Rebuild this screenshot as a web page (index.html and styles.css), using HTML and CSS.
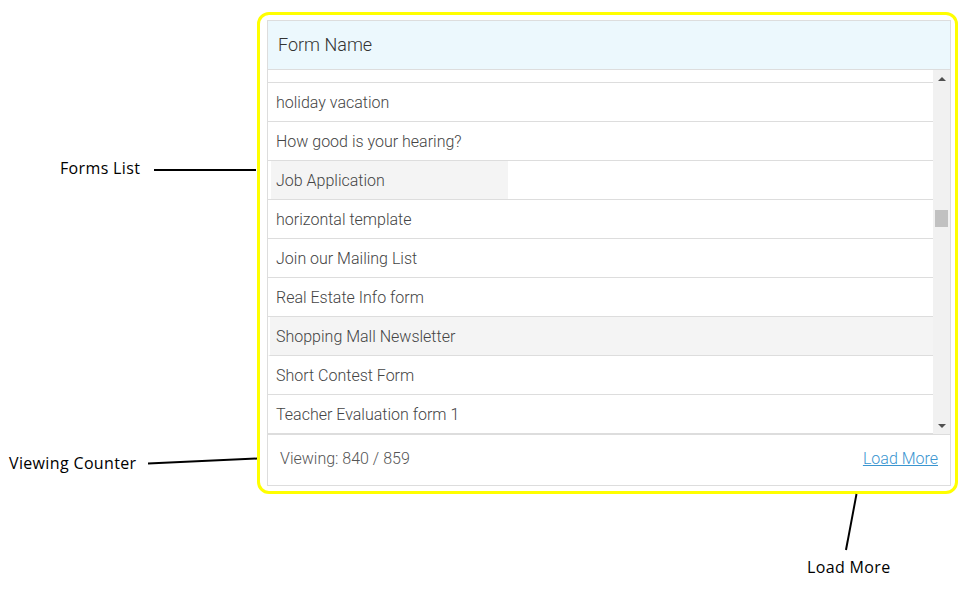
FILE: index.html
```html
<!DOCTYPE html>
<html lang="en">
<head>
    <meta charset="UTF-8">
    <meta name="viewport" content="width=device-width, initial-scale=1.0">
    <title>Forms List - Load More</title>
    <link rel="stylesheet" href="styles.css">
</head>
<body>
    <div class="canvas">
        <div class="frame">
            <div class="panel">
                <div class="panel-head">Form Name</div>

                <div class="panel-body">
                    <ul class="form-list">
                        <li class="row row-cut"></li>
                        <li class="row">holiday vacation</li>
                        <li class="row">How good is your hearing?</li>
                        <li class="row row-split"><span class="cell-hover">Job Application</span></li>
                        <li class="row">horizontal template</li>
                        <li class="row">Join our Mailing List</li>
                        <li class="row">Real Estate Info form</li>
                        <li class="row row-active">Shopping Mall Newsletter</li>
                        <li class="row">Short Contest Form</li>
                        <li class="row">Teacher Evaluation form 1</li>
                    </ul>

                    <div class="scrollbar">
                        <div class="scroll-btn"><span class="arrow-up"></span></div>
                        <div class="scroll-track">
                            <div class="scroll-thumb"></div>
                        </div>
                        <div class="scroll-btn"><span class="arrow-down"></span></div>
                    </div>
                </div>

                <div class="panel-foot">
                    <span class="counter">Viewing: 840 / 859</span>
                    <a href="#" class="load-more">Load More</a>
                </div>
            </div>
        </div>

        <!-- callouts -->
        <svg class="callout-lines" width="971" height="600" viewBox="0 0 971 600">
            <line x1="154" y1="170" x2="256" y2="170" />
            <line x1="148" y1="463.5" x2="257" y2="458.5" />
            <line x1="856.5" y1="494" x2="846" y2="550" />
        </svg>
        <span class="callout callout-forms">Forms List</span>
        <span class="callout callout-counter">Viewing Counter</span>
        <span class="callout callout-more">Load More</span>
    </div>
</body>
</html>
```

FILE: styles.css
```css
body {
    margin: 0;
    padding: 0;
    background-color: #ffffff;
    font-family: 'Roboto', 'Liberation Sans', sans-serif;
}

.canvas {
    position: relative;
    width: 971px;
    height: 600px;
    overflow: hidden;
}

.frame {
    display: inline-block;
    margin: 12px 0 0 257px;
    padding: 5px 4px 5px 7px;
    border: 3px solid #ffff00;
    border-radius: 12px;
}

.panel {
    width: 682px;
    border: 1px solid #dddddd;
    background-color: #ffffff;
}

.panel-head {
    height: 48px;
    line-height: 48px;
    padding-left: 10px;
    background-color: #ecf8fd;
    border-bottom: 1px solid #dddddd;
    color: #333333;
    font-size: 18px;
    font-weight: 300;
}

.panel-body {
    display: flex;
    height: 364px;
}

.form-list {
    flex: 1;
    margin: 0;
    padding: 0;
    list-style: none;
}

.row {
    height: 36px;
    line-height: 36px;
    padding: 2px 0 0 8px;
    border-bottom: 1px solid #dddddd;
    color: #444444;
    font-size: 16px;
    font-weight: 300;
    white-space: nowrap;
}

.row-cut {
    height: 10px;
}

.row-split {
    height: 38px;
    padding: 0 0 0 3px;
}

.cell-hover {
    display: inline-block;
    width: 232px;
    height: 36px;
    padding: 2px 0 0 5px;
    background-color: #f4f4f4;
}

.row-active {
    border-left: 2px solid #ffffff;
    padding-left: 6px;
    background-color: #f4f4f4;
}

.scrollbar {
    display: flex;
    flex-direction: column;
    width: 17px;
    background-color: #f1f1f1;
}

.scroll-btn {
    display: flex;
    align-items: center;
    justify-content: center;
    height: 17px;
}

.arrow-up {
    width: 0;
    height: 0;
    border-left: 4px solid transparent;
    border-right: 4px solid transparent;
    border-bottom: 4px solid #505050;
}

.arrow-down {
    width: 0;
    height: 0;
    border-left: 4px solid transparent;
    border-right: 4px solid transparent;
    border-top: 4px solid #505050;
}

.scroll-track {
    flex: 1;
}

.scroll-thumb {
    width: 13px;
    height: 17px;
    margin: 123px 0 0 2px;
    background-color: #c1c1c1;
}

.panel-foot {
    display: flex;
    justify-content: space-between;
    height: 46px;
    line-height: 46px;
    padding: 1px 12px 3px 12px;
    border-top: 1px solid #dddddd;
    color: #555555;
    font-size: 16px;
    font-weight: 300;
}

.load-more {
    color: #3a95d0;
    text-decoration: underline;
}

/* callouts */
.callout-lines {
    position: absolute;
    top: 0;
    left: 0;
    pointer-events: none;
}

.callout-lines line {
    stroke: #000000;
    stroke-width: 2;
}

.callout {
    position: absolute;
    font-family: 'Open Sans', 'Noto Sans', sans-serif;
    font-size: 16px;
    letter-spacing: 0.35px;
    color: #000000;
    line-height: 20px;
    white-space: nowrap;
}

.callout-forms {
    left: 60px;
    top: 158px;
}

.callout-counter {
    left: 9px;
    top: 453px;
}

.callout-more {
    left: 807px;
    top: 557px;
}
```
